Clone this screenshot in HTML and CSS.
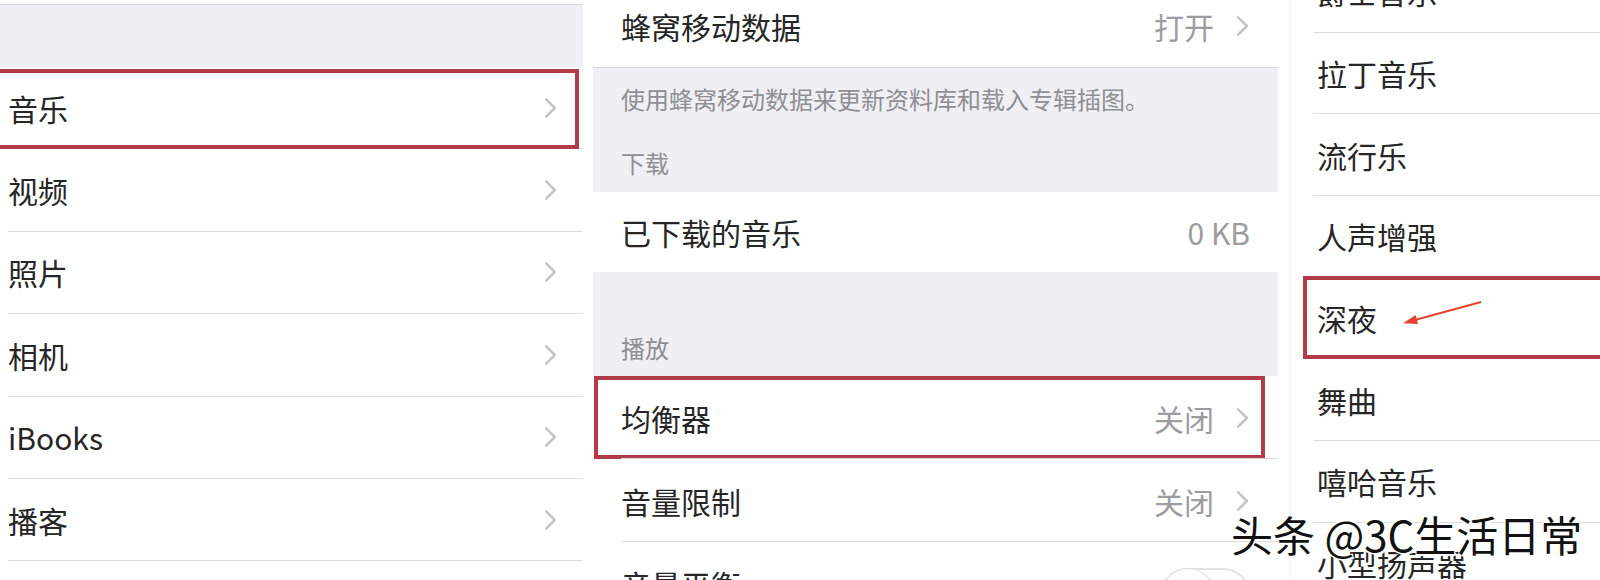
FILE: index.html
```html
<!DOCTYPE html>
<html>
  <head>
    <meta charset="UTF-8">
    <title>音乐设置</title>
    <link rel="stylesheet" href="styles.css">
  </head>
  <body>
    <div class="page">

      <!-- settings list -->
      <div class="col col-settings">
        <div class="band band-top"></div>
        <div class="row">
          <span class="label">音乐</span>
          <svg class="chev" viewBox="0 0 12 20"><path d="M2 2l8 8-8 8"/></svg>
          <span class="mark"></span>
        </div>
        <div class="row">
          <span class="label">视频</span>
          <svg class="chev" viewBox="0 0 12 20"><path d="M2 2l8 8-8 8"/></svg>
        </div>
        <div class="row">
          <span class="label">照片</span>
          <svg class="chev" viewBox="0 0 12 20"><path d="M2 2l8 8-8 8"/></svg>
        </div>
        <div class="row">
          <span class="label">相机</span>
          <svg class="chev" viewBox="0 0 12 20"><path d="M2 2l8 8-8 8"/></svg>
        </div>
        <div class="row">
          <span class="label">iBooks</span>
          <svg class="chev" viewBox="0 0 12 20"><path d="M2 2l8 8-8 8"/></svg>
        </div>
        <div class="row">
          <span class="label">播客</span>
          <svg class="chev" viewBox="0 0 12 20"><path d="M2 2l8 8-8 8"/></svg>
        </div>
      </div>

      <!-- music settings -->
      <div class="col col-music">
        <div class="row row-first">
          <span class="label">蜂窝移动数据</span>
          <span class="value">打开</span>
          <svg class="chev" viewBox="0 0 12 20"><path d="M2 2l8 8-8 8"/></svg>
        </div>
        <div class="band band-note">
          <p class="note">使用蜂窝移动数据来更新资料库和载入专辑插图。</p>
          <p class="head head-dl">下载</p>
        </div>
        <div class="row row-single">
          <span class="label">已下载的音乐</span>
          <span class="value value-end">0 KB</span>
        </div>
        <div class="band band-play">
          <p class="head">播放</p>
        </div>
        <div class="row">
          <span class="label">均衡器</span>
          <span class="value">关闭</span>
          <svg class="chev" viewBox="0 0 12 20"><path d="M2 2l8 8-8 8"/></svg>
          <span class="mark"></span>
        </div>
        <div class="row">
          <span class="label">音量限制</span>
          <span class="value">关闭</span>
          <svg class="chev" viewBox="0 0 12 20"><path d="M2 2l8 8-8 8"/></svg>
        </div>
        <div class="row row-toggle">
          <span class="label">音量平衡</span>
          <span class="toggle"><span class="knob"></span></span>
        </div>
      </div>

      <!-- equalizer presets -->
      <div class="col col-eq">
        <div class="row"><span class="label">爵士音乐</span></div>
        <div class="row"><span class="label">拉丁音乐</span></div>
        <div class="row"><span class="label">流行乐</span></div>
        <div class="row"><span class="label">人声增强</span></div>
        <div class="row">
          <span class="label">深夜</span>
          <span class="mark"></span>
          <svg class="arrow" viewBox="0 0 80 24">
            <line x1="78" y1="1" x2="10" y2="19.5"/>
            <polygon points="0,22.3 15,23 12.6,14"/>
          </svg>
        </div>
        <div class="row"><span class="label">舞曲</span></div>
        <div class="row"><span class="label">嘻哈音乐</span></div>
        <div class="row"><span class="label">小型扬声器</span></div>
      </div>

      <div class="watermark">头条 @3C生活日常</div>
    </div>
  </body>
</html>
```

FILE: styles.css
```css
/* page frame */
body {
  margin: 0;
  background-color: #fff;
  font-family: "Noto Sans CJK SC", "Noto Sans", sans-serif;
  color: #262626;
}

.page {
  position: relative;
  display: flex;
  width: 1600px;
  height: 580px;
  overflow: hidden;
}

.col {
  display: flex;
  flex-direction: column;
  flex: none;
}

.col-settings {
  width: 583px;
  padding-top: 4px;
}

.col-music {
  width: 685px;
  margin-left: 10px;
}

.col-eq {
  width: 310px;
  margin-left: 12px;
  margin-top: -49px;
  border-left: 1px solid #f3f3f5;
}

/* rows */
.row {
  position: relative;
  display: flex;
  align-items: center;
  flex: none;
  box-sizing: border-box;
  background-color: #fff;
  border-bottom: 1px solid #dcdce0;
}

.label {
  font-size: 30px;
  line-height: 1;
  flex: 1;
}

.value {
  font-size: 30px;
  line-height: 1;
  color: #9c9ca1;
  margin-right: 22px;
}

.value-end {
  margin-right: 0;
}

.chev {
  width: 13px;
  height: 22px;
  fill: none;
  stroke: #c4c4c8;
  stroke-width: 2.3;
  stroke-linecap: round;
  stroke-linejoin: round;
}

.col-settings .row {
  height: 82.4px;
  margin-left: 8px;
  padding-right: 26px;
}

/* the middle list draws its inset separators itself */
.col-music .row {
  height: 83px;
  padding-left: 28px;
  padding-right: 29px;
  border-bottom: none;
}

.col-music .row::after {
  content: "";
  position: absolute;
  left: 28px;
  right: 0;
  bottom: 0;
  height: 1px;
  background-color: #dcdce0;
}

.col-music .row-first {
  height: 68px;
  padding-bottom: 16px;
}

.col-music .row-first::after {
  left: 0;
  background-color: #d6d6da;
}

.col-music .row-single {
  height: 80px;
  padding-right: 28px;
}

.col-music .row-single::after,
.col-music .row-toggle::after {
  display: none;
}

.col-music .row-toggle {
  padding-right: 27px;
}

.col-eq .row {
  height: 81.7px;
  margin-left: 22px;
  padding-left: 4px;
}

/* grey group bands */
.band {
  flex: none;
  background-color: #efeff4;
}

.band-top {
  height: 62px;
  border-top: 1px solid #d4d4d8;
}

.band-note {
  height: 124px;
  box-sizing: border-box;
  padding: 16px 28px 0;
}

.band-play {
  height: 104px;
  box-sizing: border-box;
  padding: 61px 28px 0;
}

.note, .head {
  margin: 0;
  font-size: 24px;
  line-height: 30px;
  color: #8e8e93;
}

.head-dl {
  margin-top: 34px;
}

/* switch */
.toggle {
  position: relative;
  width: 91px;
  height: 56px;
  box-sizing: border-box;
  border: 2px solid #e3e3e6;
  border-radius: 28px;
  background-color: #fff;
  margin-top: 24px;
}

.knob {
  position: absolute;
  top: -1px;
  left: -1px;
  width: 54px;
  height: 54px;
  border-radius: 50%;
  background-color: #fff;
  box-shadow: 0 0 0 1px #dcdcdf, 0 3px 4px rgba(0, 0, 0, 0.12);
}

/* annotation marks */
.mark {
  position: absolute;
  box-sizing: border-box;
  border: 4px solid #b23b4a;
  pointer-events: none;
}

.col-settings .mark {
  top: 2px;
  bottom: -1px;
  left: -12px;
  right: 4px;
}

.col-music .mark {
  top: 0;
  bottom: 0;
  left: 1px;
  right: 13px;
}

.col-eq .mark {
  top: -2px;
  bottom: -1px;
  left: -10px;
  right: -12px;
}

.arrow {
  position: absolute;
  left: 90px;
  top: 23px;
  width: 80px;
  height: 24px;
}

.arrow line {
  stroke: #e5432d;
  stroke-width: 2;
}

.arrow polygon {
  fill: #e5432d;
}

/* watermark */
.watermark {
  position: absolute;
  left: 1231px;
  top: 510px;
  font-size: 42px;
  line-height: 48px;
  color: #111;
  white-space: nowrap;
  text-shadow: 1px 1px 0 #fff, -1px -1px 0 #fff, 1px -1px 0 #fff, -1px 1px 0 #fff, 2px 2px 1px #fff;
}
```
